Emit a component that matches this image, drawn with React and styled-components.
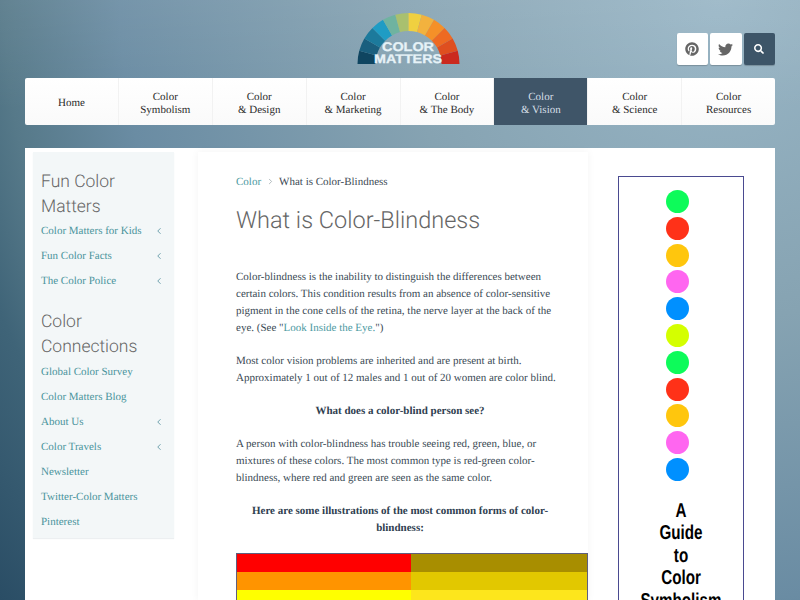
import styled, { createGlobalStyle } from "styled-components";
import { FaPinterest, FaTwitter, FaSearch } from "react-icons/fa";
import { ChevronLeft, ChevronRight } from "lucide-react";

const GlobalStyle = createGlobalStyle`
  html, body {
    margin: 0;
    padding: 0;
    height: 600px;
    overflow: hidden;
  }
  body {
    background:
      linear-gradient(rgba(255, 255, 255, 0.08), rgba(255, 255, 255, 0) 110px),
      radial-gradient(circle 937px at 720px 0, #99b6c6 0, #86a3b2 320px, #6a8ca3 600px, #567989 715px, #3f6478 785px, #2a4d65 937px);
    font-family: "Liberation Serif", serif;
    text-rendering: geometricPrecision;
  }
`;

const logoColors = [
  "#0f4560", "#1a5f7e", "#1c7a9c", "#1f9cc4", "#6fb3a0", "#a9c06f",
  "#f0d040", "#f2b23e", "#f59028", "#ee6a22", "#df4f1f", "#cb2a1e",
];

const navItems = [
  ["Home"],
  ["Color", "Symbolism"],
  ["Color", "& Design"],
  ["Color", "& Marketing"],
  ["Color", "& The Body"],
  ["Color", "& Vision"],
  ["Color", "& Science"],
  ["Color", "Resources"],
];

const funLinks = [
  ["Color Matters for Kids", true],
  ["Fun Color Facts", true],
  ["The Color Police", true],
];

const connectLinks = [
  ["Global Color Survey", false],
  ["Color Matters Blog", false],
  ["About Us", true],
  ["Color Travels", true],
  ["Newsletter", false],
  ["Twitter-Color Matters", false],
  ["Pinterest", false],
];

const dots = [
  "#0dfb5a", "#ff3118", "#ffc60d", "#ff66f0", "#0090ff", "#d4ff00",
  "#0dfb5a", "#ff3118", "#ffc60d", "#ff66f0", "#0090ff",
];

const swatches = [
  ["#ff0000", "#a88e00"],
  ["#ff9400", "#e2c800"],
  ["#ffff00", "#fde61c"],
];

function segment(i) {
  const cx = 51.5, cy = 51, ro = 51, ri = 33;
  const a0 = Math.PI - (i * Math.PI) / 12;
  const a1 = Math.PI - ((i + 1) * Math.PI) / 12;
  const p = (r, a) => `${(cx + r * Math.cos(a)).toFixed(2)} ${(cy - r * Math.sin(a)).toFixed(2)}`;
  return `M${p(ro, a0)} A${ro} ${ro} 0 0 1 ${p(ro, a1)} L${p(ri, a1)} A${ri} ${ri} 0 0 0 ${p(ri, a0)} Z`;
}

const Logo = () => (
  <LogoSvg width="103" height="52" viewBox="0 0 103 52">
    {logoColors.map((c, i) => (
      <path key={c} d={segment(i)} fill={c} />
    ))}
    <LogoText x="51" y="37.8" textLength="52" lengthAdjust="spacingAndGlyphs">COLOR</LogoText>
    <LogoText x="51" y="50.3" textLength="68" lengthAdjust="spacingAndGlyphs">MATTERS</LogoText>
  </LogoSvg>
);

const MenuLink = ({ label, sub }) => (
  <MenuRow>
    <MenuLabel>{label}</MenuLabel>
    {sub && <ChevronLeft size={10} strokeWidth={2} />}
  </MenuRow>
);

const App = () => {
  return (
    <Page>
      <GlobalStyle />
      <Header>
        <span />
        <Logo />
        <Social>
          <SocialButton><FaPinterest size={14} /></SocialButton>
          <SocialButton><FaTwitter size={15} /></SocialButton>
          <SocialButton $dark><FaSearch size={10} /></SocialButton>
        </Social>
      </Header>

      <Nav>
        {navItems.map((lines) => (
          <NavItem key={lines.join()} $active={lines[1] === "& Vision"} $double={lines.length > 1}>
            {lines.map((l) => <span key={l}>{l}</span>)}
          </NavItem>
        ))}
      </Nav>

      <Content>
        <Sidebar>
          <SideTitle>Fun Color Matters</SideTitle>
          {funLinks.map(([l, s]) => <MenuLink key={l} label={l} sub={s} />)}
          <SideTitle $second>Color Connections</SideTitle>
          {connectLinks.map(([l, s]) => <MenuLink key={l} label={l} sub={s} />)}
        </Sidebar>

        <Main>
          <Crumbs>
            <CrumbLink>Color</CrumbLink>
            <ChevronRight size={9} color="#9aa5aa" />
            <span>What is Color-Blindness</span>
          </Crumbs>
          <Title>What is Color-Blindness</Title>
          <Para>
            Color-blindness is the inability to distinguish the differences between
            certain colors. This condition results from an absence of color-sensitive
            pigment in the cone cells of the retina, the nerve layer at the back of the
            eye. (See "<CrumbLink>Look Inside the Eye.</CrumbLink>")
          </Para>
          <Para>
            Most color vision problems are inherited and are present at birth.
            Approximately 1 out of 12 males and 1 out of 20 women are color blind.
          </Para>
          <Lead>What does a color-blind person see?</Lead>
          <Para>
            A person with color-blindness has trouble seeing red, green, blue, or
            mixtures of these colors. The most common type is red-green color-blindness,
            where red and green are seen as the same color.
          </Para>
          <Lead>Here are some illustrations of the most common forms of color-blindness:</Lead>
          <Swatches>
            {swatches.flat().map((c, i) => <Swatch key={i} $color={c} />)}
          </Swatches>
        </Main>

        <Aside>
          <Banner>
            <Dots>
              {dots.map((c, i) => <Dot key={i} $color={c} />)}
            </Dots>
            <BannerText>A<br />Guide<br />to<br />Color<br />Symbolism</BannerText>
          </Banner>
        </Aside>
      </Content>
    </Page>
  );
};

const Page = styled.div`
  width: 750px;
  height: 600px;
  margin: 0 auto;
  overflow: hidden;
`;

const Header = styled.header`
  height: 78px;
  display: grid;
  grid-template-columns: 332px 103px 1fr;
  align-items: start;
  box-sizing: border-box;
  padding-top: 13px;
`;

const LogoSvg = styled.svg`
  display: block;
`;

const LogoText = styled.text`
  font-family: "Liberation Sans", sans-serif;
  font-weight: 700;
  font-size: 12.5px;
  fill: #e6f2f7;
  stroke: #e6f2f7;
  stroke-width: 0.3px;
  text-anchor: middle;
`;

const Social = styled.div`
  display: flex;
  justify-content: flex-end;
  gap: 2px;
  margin-top: 20px;
`;

const SocialButton = styled.div`
  width: 31.5px;
  height: 32px;
  border-radius: 2px;
  display: flex;
  align-items: center;
  justify-content: center;
  background: ${(p) => (p.$dark ? "#3d5568" : "#fff")};
  color: ${(p) => (p.$dark ? "#fff" : "#666")};
  box-shadow: 0 1px 1px rgba(0, 0, 0, 0.2);
`;

const Nav = styled.nav`
  display: flex;
  height: 47px;
  background: linear-gradient(#fff, #fafafa);
  border-radius: 2px;
  overflow: hidden;
`;

const NavItem = styled.div`
  flex: 1;
  display: flex;
  flex-direction: column;
  align-items: center;
  justify-content: center;
  padding-top: ${(p) => (p.$double ? "5px" : "3px")};
  font-size: 11px;
  line-height: 13px;
  color: ${(p) => (p.$active ? "#d5dfe6" : "#2b2b2b")};
  background: ${(p) => (p.$active ? "#3f5568" : "transparent")};
  & + & {
    border-left: 1px solid #f2f2f2;
  }
`;

const Content = styled.div`
  margin-top: 23px;
  height: 452px;
  background: #fff;
  display: flex;
  padding: 4px 0 0 8px;
  box-sizing: border-box;
`;

const Sidebar = styled.aside`
  width: 141px;
  height: 386px;
  flex-shrink: 0;
  box-sizing: border-box;
  padding: 18px 8px 0;
  background: #f3f7f8;
  box-shadow: 0 1px 1px #eceff1;
`;

const SideTitle = styled.h3`
  margin: ${(p) => (p.$second ? "17px 0 -1px" : "0 0 -2px")};
  font-family: Roboto, sans-serif;
  font-weight: 300;
  font-size: 17.5px;
  line-height: 25px;
  color: #666;
`;

const MenuRow = styled.div`
  height: 25px;
  display: flex;
  align-items: center;
  justify-content: space-between;
  padding-right: 2px;
  color: #55909f;
`;

const MenuLabel = styled.span`
  font-size: 11px;
  color: #4a949c;
`;

const Main = styled.main`
  width: 390px;
  margin-left: 24px;
  flex-shrink: 0;
  box-sizing: border-box;
  padding: 22.5px 0 0 38px;
  box-shadow: 0 0 8px rgba(0, 0, 0, 0.05);
`;

const Crumbs = styled.div`
  display: flex;
  align-items: center;
  gap: 4.5px;
  font-size: 11px;
  line-height: 14px;
  color: #3d4a55;
`;

const CrumbLink = styled.span`
  color: #4d9aa2;
`;

const Title = styled.h1`
  margin: 16.5px 0 34px;
  font-family: Roboto, sans-serif;
  font-weight: 300;
  font-size: 23.5px;
  line-height: 30px;
  color: #666;
`;

const Para = styled.p`
  margin: 0 0 16px;
  width: 328px;
  font-size: 11px;
  line-height: 17px;
  color: #3a4a55;
`;

const Lead = styled.p`
  margin: 0 0 16px;
  width: 328px;
  font-size: 11px;
  line-height: 17px;
  font-weight: 700;
  text-align: center;
  color: #2f4050;
`;

const Swatches = styled.div`
  width: 352px;
  box-sizing: border-box;
  display: grid;
  grid-template-columns: 174px 176px;
  grid-auto-rows: 18px;
  border: 1px solid #5f5f7e;
`;

const Swatch = styled.div`
  background: ${(p) => p.$color};
`;

const Aside = styled.div`
  flex: 1;
  padding: 24px 0 0 30px;
`;

const Banner = styled.div`
  width: 126px;
  height: 440px;
  box-sizing: border-box;
  border: 1px solid #4a4a90;
  padding-top: 13px;
`;

const Dots = styled.div`
  display: flex;
  flex-direction: column;
  align-items: center;
  gap: 3.8px;
  padding-right: 8px;
`;

const Dot = styled.span`
  width: 23px;
  height: 23px;
  border-radius: 50%;
  background: ${(p) => p.$color};
`;

const BannerText = styled.div`
  margin-top: 19px;
  text-align: center;
  font-family: "Liberation Sans", sans-serif;
  font-weight: 700;
  font-size: 20px;
  line-height: 22.5px;
  color: #000;
  transform: scaleX(0.76);
`;

export default App;
